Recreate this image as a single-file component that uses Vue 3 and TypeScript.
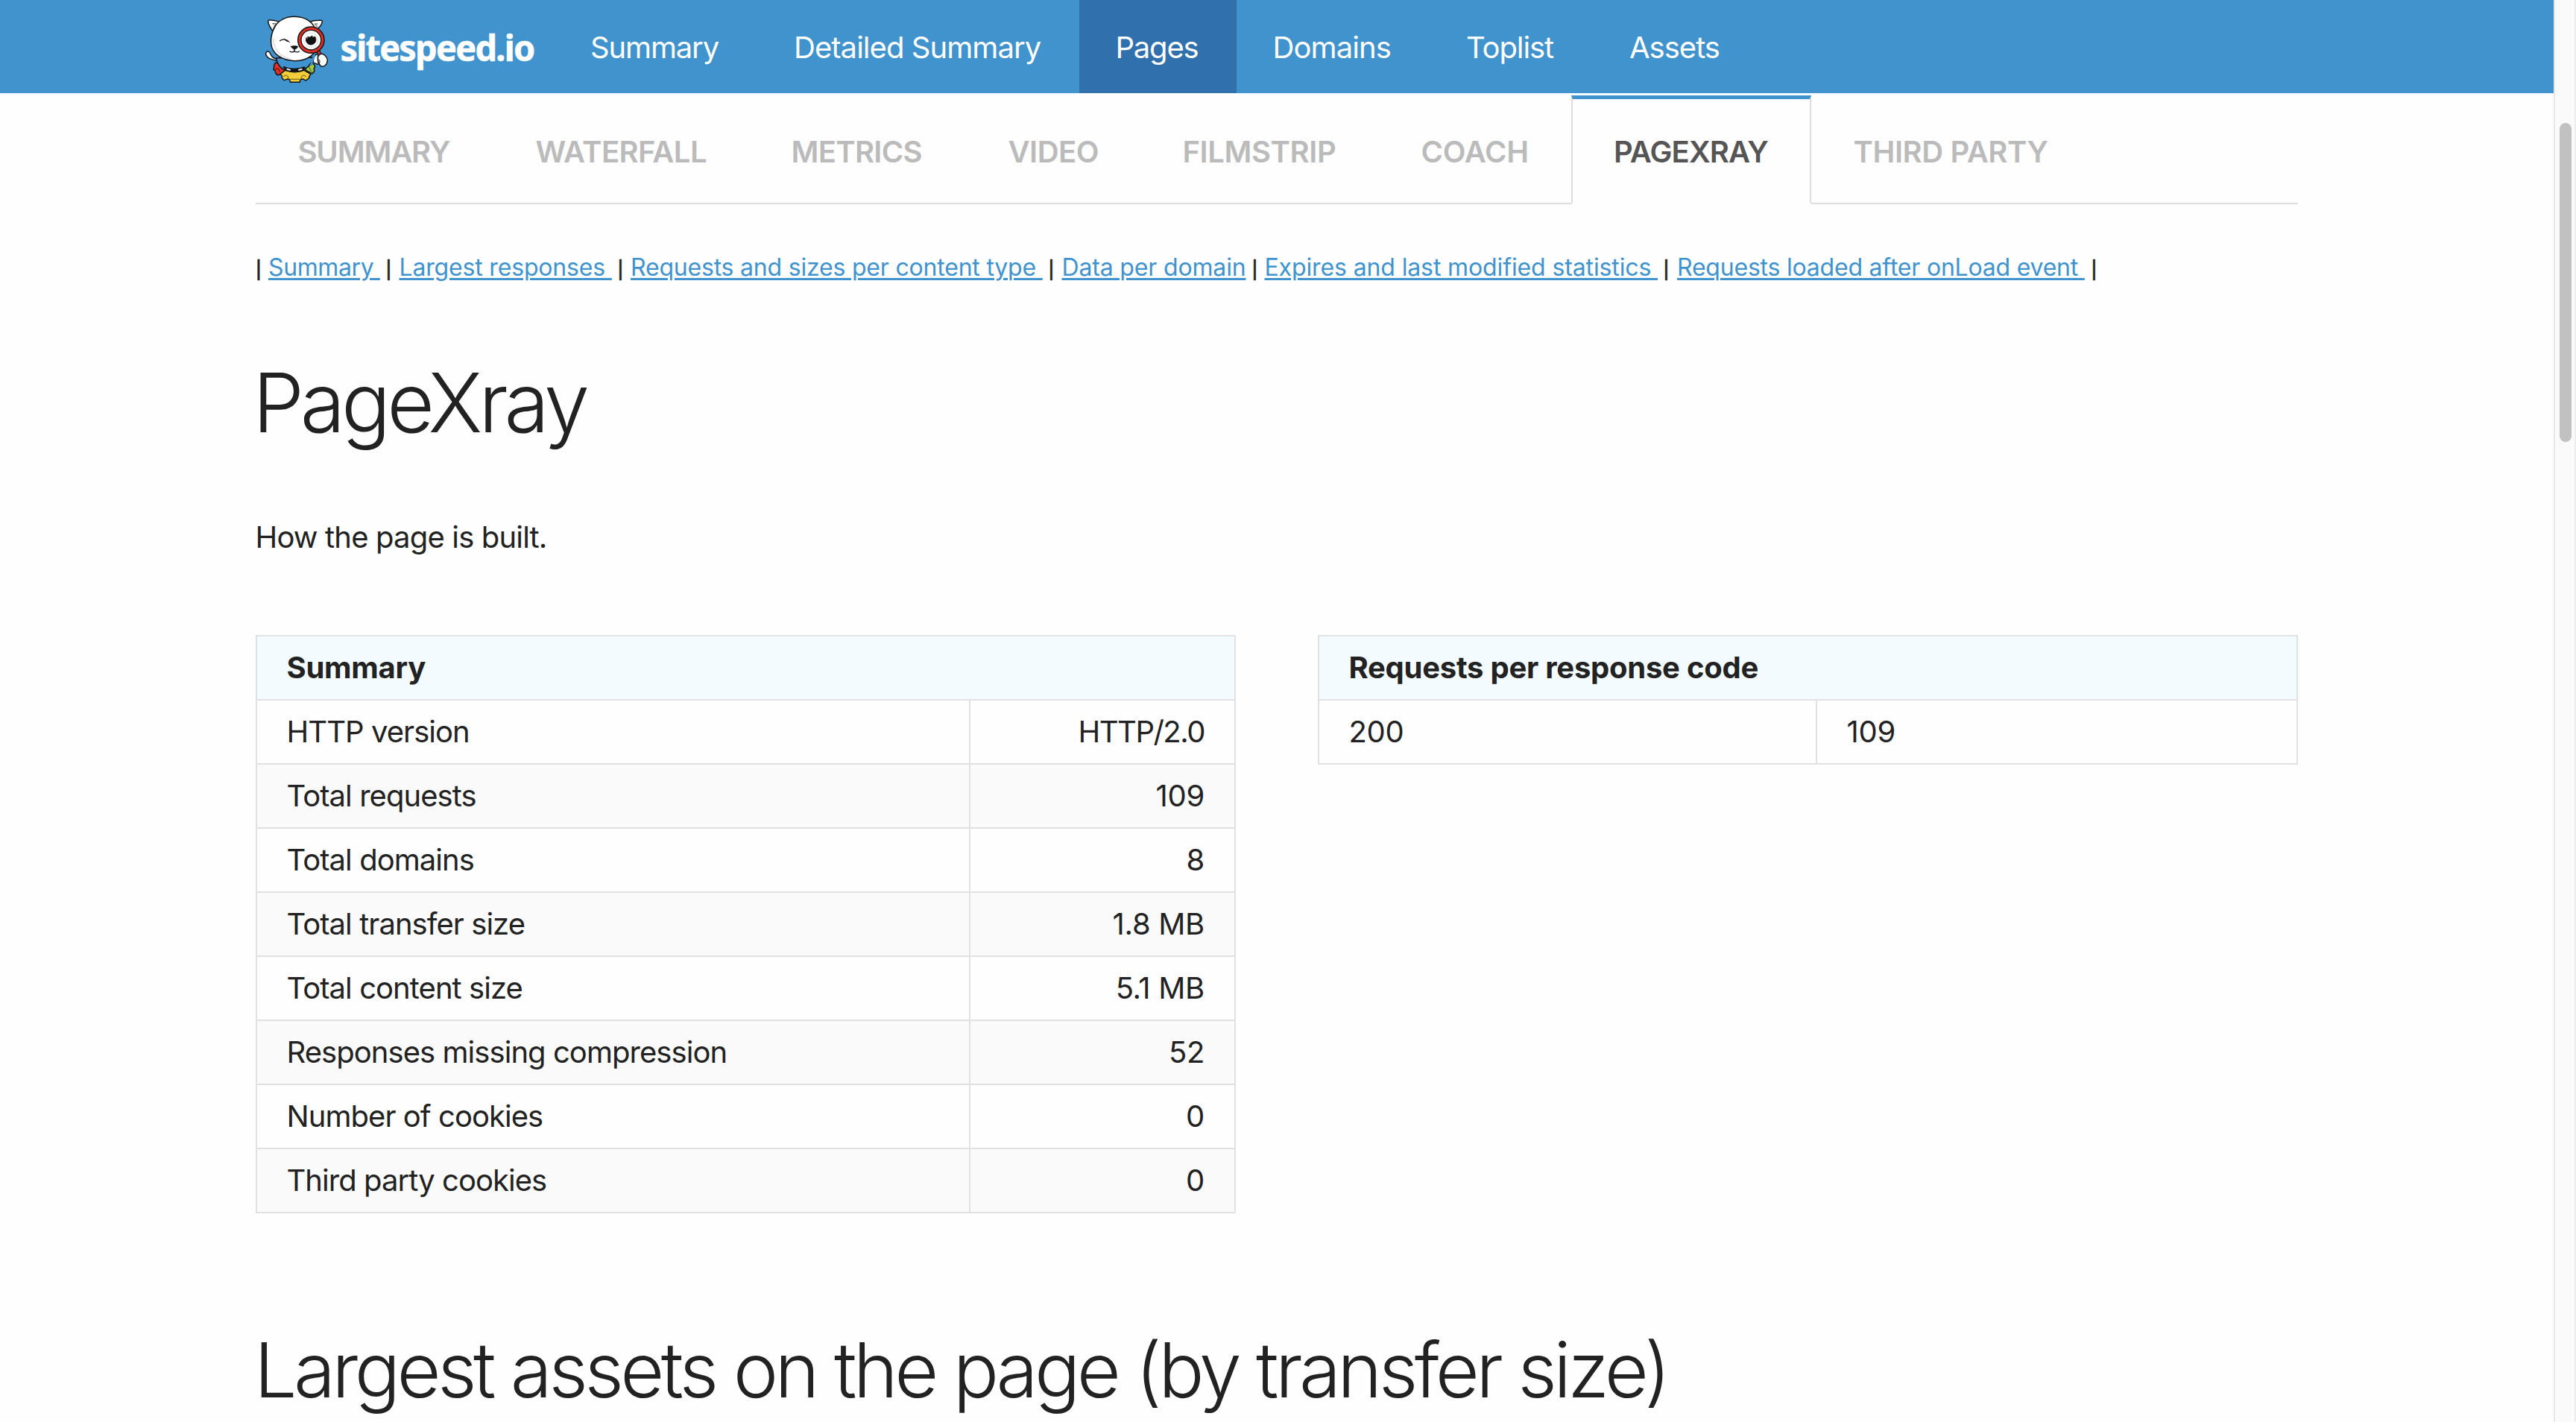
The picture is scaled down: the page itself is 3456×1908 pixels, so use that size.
<script setup lang="ts">
interface Label {
  text: string
  tracking: number
}

const navItems: Label[] = [
  { text: 'Summary', tracking: -1.15 },
  { text: 'Detailed Summary', tracking: -0.95 },
  { text: 'Pages', tracking: -1.2 },
  { text: 'Domains', tracking: -0.9 },
  { text: 'Toplist', tracking: -1.1 },
  { text: 'Assets', tracking: -1 },
]

const tabs: Label[] = [
  { text: 'SUMMARY', tracking: -1.15 },
  { text: 'WATERFALL', tracking: -0.58 },
  { text: 'METRICS', tracking: -0.7 },
  { text: 'VIDEO', tracking: -0.5 },
  { text: 'FILMSTRIP', tracking: -0.4 },
  { text: 'COACH', tracking: -0.2 },
  { text: 'PAGEXRAY', tracking: -0.85 },
  { text: 'THIRD PARTY', tracking: -0.4 },
]

const anchors: Label[] = [
  { text: 'Summary\u00a0', tracking: -0.4 },
  { text: 'Largest responses\u00a0', tracking: -0.17 },
  { text: 'Requests and sizes per content type\u00a0', tracking: -0.2 },
  { text: 'Data per domain', tracking: -0.16 },
  { text: 'Expires and last modified statistics\u00a0', tracking: -0.12 },
  { text: 'Requests loaded after onLoad event\u00a0', tracking: -0.21 },
]

const summary: [string, string][] = [
  ['HTTP version', 'HTTP/2.0'],
  ['Total requests', '109'],
  ['Total domains', '8'],
  ['Total transfer size', '1.8 MB'],
  ['Total content size', '5.1 MB'],
  ['Responses missing compression', '52'],
  ['Number of cookies', '0'],
  ['Third party cookies', '0'],
]

const spacing = (item: Label) => ({ letterSpacing: `${item.tracking}px` })
</script>

<template>
  <div class="window">
    <div class="page">
      <header class="topbar">
        <svg class="logo" viewBox="343 0 399 125" width="399" height="125">
          <g transform="translate(350 16) scale(0.33333)" stroke="#151515" stroke-width="4.5" stroke-linejoin="round" stroke-linecap="round">
            <path d="M66 190C48 187 43 179 38 168C34 158 25 156 21 163C17 171 24 183 36 188C46 193 58 194 68 196Z" fill="#fff" />
            <path d="M60 204L54 211L51 232L57 236L59 245L66 254L79 251L100 238L96 222L78 210Z" fill="#e0322a" />
            <path d="M57 232C66 224 75 229 75 240" fill="none" stroke="#7c1713" />
            <path d="M204 204L215 213L218 222L213 228L216 238L207 248L190 240L178 232L184 219Z" fill="#a5cc44" />
            <path d="M193 221C200 226 196 236 205 238" fill="none" stroke="#536f25" stroke-width="3.5" />
            <path d="M78 250L98 235C122 244 150 244 174 235L201 251L195 258L194 266L181 276L171 271C161 268 157 274 157 283L118 283C118 274 114 268 104 271L94 275L85 266L85 258Z" fill="#f2ce3a" />
            <path d="M92 260C99 251 109 256 111 266M181 260C174 251 164 256 162 266M119 271H156" fill="none" stroke="#866d1d" stroke-width="3.5" />
            <path d="M62 185C64 207 78 229 101 235C124 240 151 240 170 233C195 223 205 205 211 183Z" fill="#3f93d0" />
            <path d="M91 221C119 232 151 231 176 222L169 235C150 241 122 241 101 235Z" fill="#151515" />
            <path d="M106 230L117 233M153 233L164 230" stroke="#eee" stroke-width="6" />
            <path d="M51 80C39 66 31 52 29 40C29 32 35 32 43 33C56 34 68 37 76 43Z" fill="#fff" />
            <path d="M224 74C236 62 245 50 247 40C247 33 241 33 233 34C220 34 207 36 198 41Z" fill="#fff" />
            <path d="M47 47L61 47L50 68M228 48L216 48L229 62" fill="#d9d9d9" stroke="#555" stroke-width="3" />
            <path d="M133 19C102 19 72 33 58 57C45 78 39 101 41 126C44 168 83 196 137 197C190 196 225 169 230 126C232 99 224 74 211 54C195 31 165 19 133 19Z" fill="#fff" />
            <path d="M51 108C50 149 77 181 119 189" fill="none" stroke="#dedede" stroke-width="5" />
            <path d="M77 116C88 107 103 109 114 121M93 109L107 118" fill="none" stroke-width="4" />
            <path d="M121 139C128 136 142 136 149 139C148 145 141 150 136 151C130 150 123 145 121 139Z" fill="#151515" stroke-width="2" />
            <path d="M135 149V157M135 157C132 163 122 163 117 159M135 157C139 163 149 163 154 159" fill="none" stroke-width="4" />
            <path d="M225 169C216 176 211 188 211 199C210 207 220 207 230 211" fill="#fff" />
            <path d="M216 178C208 187 205 200 203 213" fill="none" stroke="#3f93d0" stroke-width="8" />
            <path d="M230 155L238 176" stroke-width="16" />
            <path d="M230 155L238 176" stroke="#df2e26" stroke-width="9" />
            <circle cx="202" cy="113" r="53" fill="#df2e26" />
            <circle cx="202" cy="113" r="40" fill="#fff" stroke-width="4" />
            <circle cx="202" cy="113" r="29" fill="none" stroke="#d6dfe3" stroke-width="3" />
            <path d="M183 104L190 109L188 99C194 103 200 102 204 97C207 94 209 98 207 103L218 99C224 108 223 120 216 126C207 135 193 134 186 125C180 118 180 110 183 104Z" fill="#111" stroke-width="2" />
            <path d="M239 170C224 178 227 204 240 217C253 225 267 212 268 195C267 180 251 164 239 170Z" fill="#fff" />
            <path d="M230 190C237 192 239 199 236 206" fill="none" stroke-width="3" />
          </g>
          <text class="wordmark" x="456.5" y="81.5" textLength="260" lengthAdjust="spacingAndGlyphs">sitespeed.io</text>
        </svg>
        <nav class="menu">
          <a v-for="item in navItems" :key="item.text" :class="{ active: item.text === 'Pages' }" :style="spacing(item)">{{ item.text }}</a>
        </nav>
      </header>

      <main class="container">
        <ul class="tabs">
          <li v-for="tab in tabs" :key="tab.text" :class="{ active: tab.text === 'PAGEXRAY' }" :style="spacing(tab)">{{ tab.text }}</li>
        </ul>

        <div class="anchors">
          <template v-for="link in anchors" :key="link.text">
            <span class="bar">|</span>
            <span><a :style="spacing(link)">{{ link.text }}</a></span>
          </template>
          <span class="bar">|</span>
        </div>

        <h1>PageXray</h1>
        <p class="lead">How the page is built.</p>

        <div class="columns">
          <table class="summary">
            <thead>
              <tr><th colspan="2">Summary</th></tr>
            </thead>
            <tbody>
              <tr v-for="[name, value] in summary" :key="name">
                <td>{{ name }}</td>
                <td class="number" :class="{ tight: value === 'HTTP/2.0' }">{{ value }}</td>
              </tr>
            </tbody>
          </table>
          <table class="codes">
            <thead>
              <tr><th colspan="2">Requests per response code</th></tr>
            </thead>
            <tbody>
              <tr>
                <td>200</td>
                <td>109</td>
              </tr>
            </tbody>
          </table>
        </div>

        <h2>Largest assets on the page (by transfer size)</h2>
      </main>
    </div>
    <div class="scrollbar"><div class="thumb"></div></div>
  </div>
</template>

<style>
body {
  background: #fefefe;
}
</style>

<style scoped>
.window {
  display: flex;
  width: 3456px;
  height: 1908px;
  overflow: hidden;
  font-family: Inter, sans-serif;
  font-size: 40px;
  color: #222;
  background: #fefefe;
}
.page {
  width: 3426px;
}
.topbar {
  display: flex;
  height: 125px;
  padding-left: 343px;
  background: #4193ce;
}
.logo {
  display: block;
  overflow: visible;
}
.wordmark {
  font: 700 49px 'Noto Sans', sans-serif;
  letter-spacing: -1.8px;
  fill: #fff;
  stroke: #fff;
  stroke-width: 0.6px;
}
.menu {
  display: grid;
  grid-template-columns: 273px 433px 211px 258px 219px 222px;
}
.menu a {
  padding-left: 50px;
  line-height: 127px;
  height: 125px;
  color: #fff;
  white-space: nowrap;
}
.menu a:nth-child(3),
.menu a:nth-child(4) {
  padding-left: 48.5px;
}
.menu a.active {
  background: #2f70ad;
}
.container {
  width: 2740px;
  margin-left: 343px;
}
.tabs {
  display: grid;
  grid-template-columns: 319px 343px 291px 234px 320px 258px 322px 653px;
  height: 146px;
  margin: 3px 0 0;
  padding: 0;
  list-style: none;
  font-weight: 600;
  color: #bbb;
}
.tabs li {
  box-sizing: border-box;
  height: 146px;
  padding-left: 56.5px;
  border-bottom: 2px solid #ddd;
  line-height: 151px;
  white-space: nowrap;
}
.tabs li.active {
  padding-left: 55px;
  border: 2px solid #ddd;
  border-top: 5px solid #4193ce;
  border-bottom-color: #fefefe;
  line-height: 141px;
  color: #555;
}
.anchors {
  display: grid;
  grid-template-columns: 17px 157.5px 18px 293px 17.5px 560.5px 18px 255px 17px 535px 18.5px 555.5px 20px;
  align-items: baseline;
  height: 48px;
  margin: 61px 0 0;
  font-size: 32px;
  line-height: 48px;
  white-space: nowrap;
}
.anchors a {
  color: #4193ce;
  text-decoration: underline;
  text-decoration-thickness: 3px;
  text-underline-offset: 3px;
}
.bar {
  font-family: 'Liberation Sans', sans-serif;
  font-size: 30px;
  -webkit-text-stroke: 0.5px #222;
}
h1,
h2 {
  font-weight: 300;
  white-space: nowrap;
}
h1 {
  margin: 91px 0 0 -4px;
  font-size: 110px;
  line-height: 133px;
  letter-spacing: -5.2px;
}
h2 {
  margin: 149px 0 0 -2px;
  font-size: 102px;
  line-height: 122px;
  letter-spacing: -4.63px;
}
.lead {
  margin: 84px 0 0 -0.5px;
  line-height: 60px;
  letter-spacing: -0.84px;
}
.columns {
  display: flex;
  align-items: flex-start;
  gap: 110px;
  margin-top: 101px;
  height: 776px;
}
table {
  box-sizing: border-box;
  width: 1315px;
  border-right: 2px solid #e1e1e1;
  border-bottom: 2px solid #e1e1e1;
  letter-spacing: -0.95px;
}
.summary {
  display: grid;
  grid-template-columns: 957px 356px;
}
.codes {
  display: grid;
  grid-template-columns: 668px 645px;
}
thead,
tbody,
tr {
  display: contents;
}
th,
td {
  display: flex;
  align-items: center;
  box-sizing: border-box;
  height: 86px;
  padding: 0 40px 0 39.5px;
  border-top: 2px solid #e1e1e1;
  border-left: 2px solid #e1e1e1;
  line-height: 60px;
  text-align: left;
  white-space: nowrap;
}
th {
  grid-column: span 2;
  background: #f3fbff;
  font-weight: 700;
  letter-spacing: -0.25px;
}
tbody tr:nth-child(even) td {
  background: #fafafa;
}
td.number {
  justify-content: flex-end;
  letter-spacing: -0.3px;
}
td.tight {
  letter-spacing: -1.5px;
}
.codes td {
  letter-spacing: -0.3px;
}
.scrollbar {
  box-sizing: border-box;
  width: 30px;
  padding: 165px 4px 0 6px;
  border-left: 2px solid #e8e8e8;
  border-right: 2px solid #ededed;
  background: #fafafa;
}
.thumb {
  width: 16px;
  height: 428px;
  border-radius: 8px;
  background: #c1c1c1;
}
</style>
